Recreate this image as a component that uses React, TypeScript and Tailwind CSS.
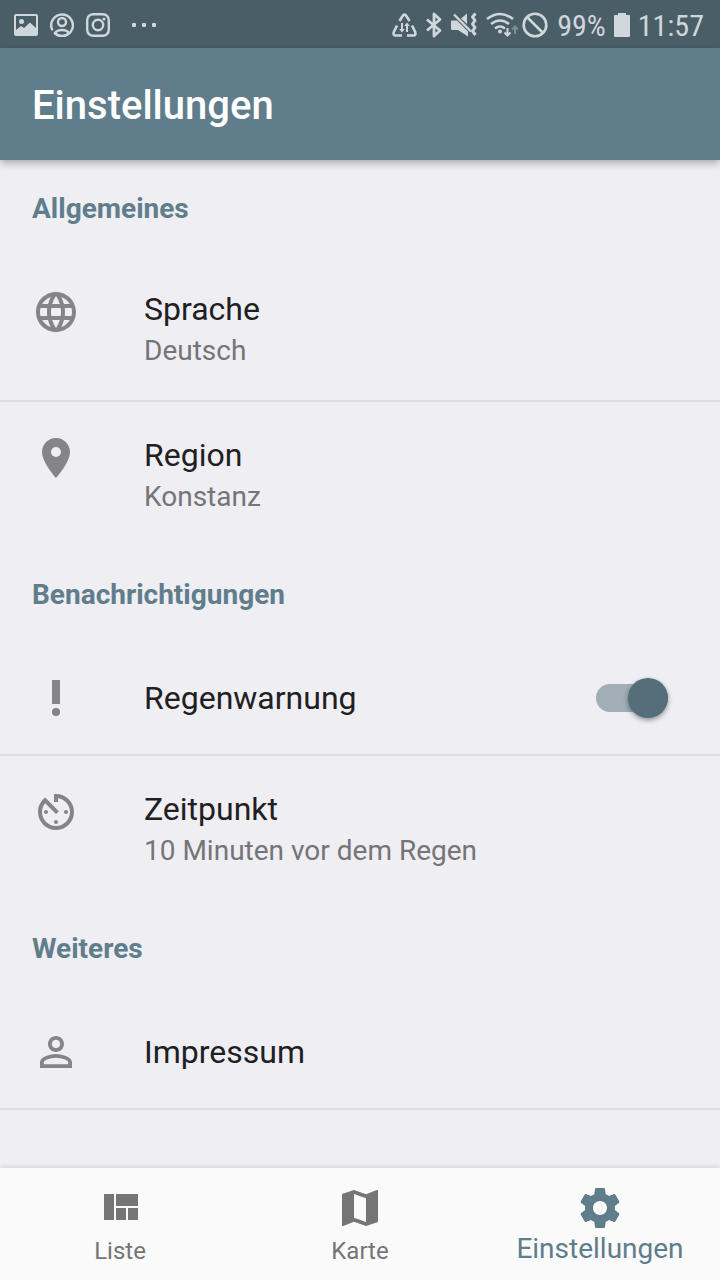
import { useState, type ReactNode } from "react";
import { MdAvTimer, MdLanguage, MdMap, MdPlace, MdPriorityHigh } from "react-icons/md";

function PersonIcon() {
  return (
    <svg viewBox="0 0 24 24" className="size-12" fill="currentColor" aria-hidden="true">
      <path d="M12 5.9c1.16 0 2.1.94 2.1 2.1s-.94 2.1-2.1 2.1S9.9 9.16 9.9 8s.94-2.1 2.1-2.1m0 9c2.97 0 6.1 1.46 6.1 2.1v1.1H5.9V17c0-.64 3.13-2.1 6.1-2.1M12 4C9.79 4 8 5.79 8 8s1.79 4 4 4 4-1.79 4-4-1.79-4-4-4zm0 9c-2.67 0-8 1.34-8 4v3h16v-3c0-2.66-5.33-4-8-4z" />
    </svg>
  );
}

function QuiltIcon() {
  return (
    <svg viewBox="0 0 24 24" className="size-12" fill="currentColor" aria-hidden="true">
      <path d="M10 18h5v-6h-5v6zm-6 0h5V5H4v13zm12 0h5v-6h-5v6zM10 5v6h11V5H10z" />
    </svg>
  );
}

function GearIcon() {
  return (
    <svg viewBox="0 0 24 24" className="size-12" fill="currentColor" aria-hidden="true">
      <path d="M19.43 12.98c.04-.32.07-.64.07-.98s-.03-.66-.07-.98l2.11-1.65c.19-.15.24-.42.12-.64l-2-3.46c-.12-.22-.39-.3-.61-.22l-2.49 1c-.52-.4-1.08-.73-1.69-.98l-.38-2.65C14.46 2.18 14.25 2 14 2h-4c-.25 0-.46.18-.49.42l-.38 2.65c-.61.25-1.17.59-1.69.98l-2.49-1c-.23-.09-.49 0-.61.22l-2 3.46c-.13.22-.07.49.12.64l2.11 1.65c-.04.32-.07.65-.07.98s.03.66.07.98l-2.11 1.65c-.19.15-.24.42-.12.64l2 3.46c.12.22.39.3.61.22l2.49-1c.52.4 1.08.73 1.69.98l.38 2.65c.03.24.24.42.49.42h4c.25 0 .46-.18.49-.42l.38-2.65c.61-.25 1.17-.59 1.69-.98l2.49 1c.23.09.49 0 .61-.22l2-3.46c.12-.22.07-.49-.12-.64l-2.11-1.65zM12 15.5c-1.93 0-3.5-1.57-3.5-3.5s1.57-3.5 3.5-3.5 3.5 1.57 3.5 3.5-1.57 3.5-3.5 3.5z" />
    </svg>
  );
}

function StatusBar() {
  return (
    <div className="flex h-12 items-center justify-between bg-[#4a5e68] pt-[2px] pr-4 pl-[14px] text-[#d0d7da]">
      <div className="flex items-center gap-3">
        <svg viewBox="0 0 24 24" className="size-6" aria-hidden="true">
          <rect x="1" y="2" width="22" height="20" rx="1" fill="none" stroke="currentColor" strokeWidth="2" />
          <circle cx="7.5" cy="8.5" r="2.5" fill="currentColor" />
          <path d="M2 17l5-4 3 2 6-5.500L22 15v7H2z" fill="currentColor" />
        </svg>
        <svg viewBox="0 0 24 24" className="size-6" fill="none" stroke="currentColor" strokeWidth="2.400" strokeLinecap="round" aria-hidden="true">
          <path d="M2.100 16.500A10.800 10.800 0 1 1 5 20.500" />
          <circle cx="12" cy="9" r="4" />
          <path d="M5 20q2-3 7-3t7 3q-3 3-7 3t-7-3z" />
        </svg>
        <svg viewBox="0 0 24 24" className="size-6" fill="none" stroke="currentColor" strokeWidth="2.400" aria-hidden="true">
          <rect x="1.200" y="1.200" width="21.600" height="21.600" rx="6" />
          <circle cx="12" cy="12" r="5.200" />
          <circle cx="18" cy="6" r="1.500" fill="currentColor" stroke="none" />
        </svg>
        <svg viewBox="0 0 24 4" className="ml-[10px] h-1 w-6" fill="currentColor" aria-hidden="true">
          <rect width="4" height="4" rx="1" />
          <rect x="10" width="4" height="4" rx="1" />
          <rect x="20" width="4" height="4" rx="1" />
        </svg>
      </div>
      <div className="flex items-center gap-2">
        <svg viewBox="0 0 26 26" className="size-[26px]" fill="none" stroke="currentColor" strokeWidth="2.600" aria-hidden="true">
          <path d="M7.500 9l3.600-5.600q1.400-1.600 2.800 0L17.500 9M5 13.500l-3.200 6.500q-1 3.500 2 3.500H10M20 13.500l3.200 6.500q1 3.500-2 3.500H15" />
          <path d="M10 11v8M15 20v-8" strokeWidth="2" />
          <path d="M7.200 17h5.600L10 20.500zM12.200 14h5.600L15 10.500z" fill="currentColor" stroke="none" />
        </svg>
        <svg viewBox="0 0 16 26" className="h-[26px] w-4" fill="none" stroke="currentColor" strokeWidth="2.800" strokeLinejoin="round" aria-hidden="true">
          <path d="M1 7.500l13 11-6 5.500V2l6 5.500-13 11" />
        </svg>
        <svg viewBox="0 0 28 26" className="h-[26px] w-7" aria-hidden="true">
          <path d="M2 8.500h5L18 19.500v5L8 18H2q-1 0-1-1V9.500q0-1 1-1zM11 6.500l6-5V12z" fill="currentColor" />
          <path d="M4 2.500l17 17" fill="none" stroke="currentColor" strokeWidth="2.400" />
          <path d="M25.500 1.500l-3 3.500 2.500 3.500-2.500 3.500 2.500 3.500-2.500 3.500 3 4" fill="none" stroke="currentColor" strokeWidth="3" strokeLinejoin="round" />
        </svg>
        <svg viewBox="0 0 32 26" className="h-[26px] w-8" fill="none" stroke="currentColor" strokeWidth="2.600" aria-hidden="true">
          <path d="M1 7q13-10 26 0M5 12q9-7 18 0M9 16.500q5-4 10 0" />
          <circle cx="14" cy="19.500" r="2" fill="currentColor" stroke="none" />
          <path d="M21.500 16v8M18.500 20.500l3 3 3-3" strokeWidth="2" />
          <path d="M29 22v-8M26 17.500l3-3 3 3" strokeWidth="2" opacity=".4" />
        </svg>
        <svg viewBox="0 0 26 26" className="mr-px -ml-1 size-[26px]" fill="none" stroke="currentColor" strokeWidth="2.600" aria-hidden="true">
          <circle cx="13" cy="13" r="11.300" />
          <path d="M5 5l16 16" />
        </svg>
        <span className="pt-[2px] font-['Roboto_Condensed',Roboto,sans-serif] text-[30px] leading-9">99%</span>
        <svg viewBox="0 0 16 24" className="h-6 w-4" fill="currentColor" aria-hidden="true">
          <path d="M4 0h8v2h3q1 0 1 1v20q0 1-1 1H1q-1 0-1-1V3q0-1 1-1h3z" />
        </svg>
        <span className="pt-[2px] font-['Roboto_Condensed',Roboto,sans-serif] text-[30px] leading-9">11:57</span>
      </div>
    </div>
  );
}

function SectionTitle({ children }: { children: ReactNode }) {
  return (
    <h2 className="flex h-24 items-center px-8 pt-[2px] text-[28px] leading-8 font-bold text-[#607d8b]">{children}</h2>
  );
}

type RowProps = { icon: ReactNode; title: string; detail?: string; divider?: boolean };

function Row({ icon, title, detail, divider }: RowProps) {
  return (
    <li className={divider ? "border-b-2 border-[#dfdee3]" : ""}>
      <button
        type="button"
        className={
          detail
            ? "flex h-36 w-full items-start gap-16 px-8 pt-8 text-left"
            : "flex h-28 w-full items-center gap-16 px-8 text-left"
        }
      >
        <span className="text-[#858587]">{icon}</span>
        <span className="flex flex-col">
          <span className="text-[32px] leading-[42px] text-[#202022]">{title}</span>
          {detail && <span className="text-[28px] leading-[42px] text-[#757577]">{detail}</span>}
        </span>
      </button>
    </li>
  );
}

export default function App() {
  const [warning, setWarning] = useState(true);

  return (
    <div className="flex min-h-screen flex-col bg-[#efeef3] font-[Roboto,sans-serif]">
      <StatusBar />
      <header className="relative flex h-28 items-center bg-[#607d8b] px-8 pt-1 shadow-[0_3px_8px_rgba(0,0,0,0.3)]">
        <h1 className="text-[40px] leading-[48px] font-medium text-white">Einstellungen</h1>
      </header>

      <main className="flex-1">
        <section>
          <SectionTitle>Allgemeines</SectionTitle>
          <ul>
            <Row icon={<MdLanguage className="size-12" />} title="Sprache" detail="Deutsch" divider />
            <Row icon={<MdPlace className="size-12" />} title="Region" detail="Konstanz" />
          </ul>
        </section>
        <section>
          <SectionTitle>Benachrichtigungen</SectionTitle>
          <ul>
            <li className="border-b-2 border-[#dfdee3]">
              <label className="flex h-28 items-center gap-16 px-8">
                <MdPriorityHigh className="size-12 text-[#858587]" />
                <span className="flex-1 text-[32px] leading-[42px] text-[#202022]">Regenwarnung</span>
                <span className="relative mr-5 flex h-10 w-[72px] items-center">
                  <input
                    type="checkbox"
                    role="switch"
                    checked={warning}
                    onChange={(e) => setWarning(e.target.checked)}
                    className="peer h-7 w-full appearance-none rounded-full bg-[#c4c4c8] checked:bg-[#a1aeb7]"
                  />
                  <span className="pointer-events-none absolute left-0 size-10 rounded-full bg-[#fafafa] shadow-[0_2px_5px_rgba(0,0,0,0.4)] peer-checked:left-8 peer-checked:bg-[#546e7a]" />
                </span>
              </label>
            </li>
            <Row icon={<MdAvTimer className="size-12" />} title="Zeitpunkt" detail="10 Minuten vor dem Regen" />
          </ul>
        </section>
        <section>
          <SectionTitle>Weiteres</SectionTitle>
          <ul>
            <Row icon={<PersonIcon />} title="Impressum" divider />
          </ul>
        </section>
      </main>

      <nav className="sticky bottom-0 grid h-28 grid-cols-3 bg-[#fafafa] text-[#757575] shadow-[0_-1px_5px_rgba(0,0,0,0.12)]">
        <a href="#liste" className="flex flex-col items-center pt-4">
          <QuiltIcon />
          <span className="text-[24px] leading-[38px]">Liste</span>
        </a>
        <a href="#karte" className="flex flex-col items-center pt-4">
          <MdMap className="size-12" />
          <span className="text-[24px] leading-[38px]">Karte</span>
        </a>
        <a href="#einstellungen" aria-current="page" className="flex flex-col items-center pt-4 text-[#607d8b]">
          <GearIcon />
          <span className="text-[28px] leading-[34px]">Einstellungen</span>
        </a>
      </nav>
    </div>
  );
}
